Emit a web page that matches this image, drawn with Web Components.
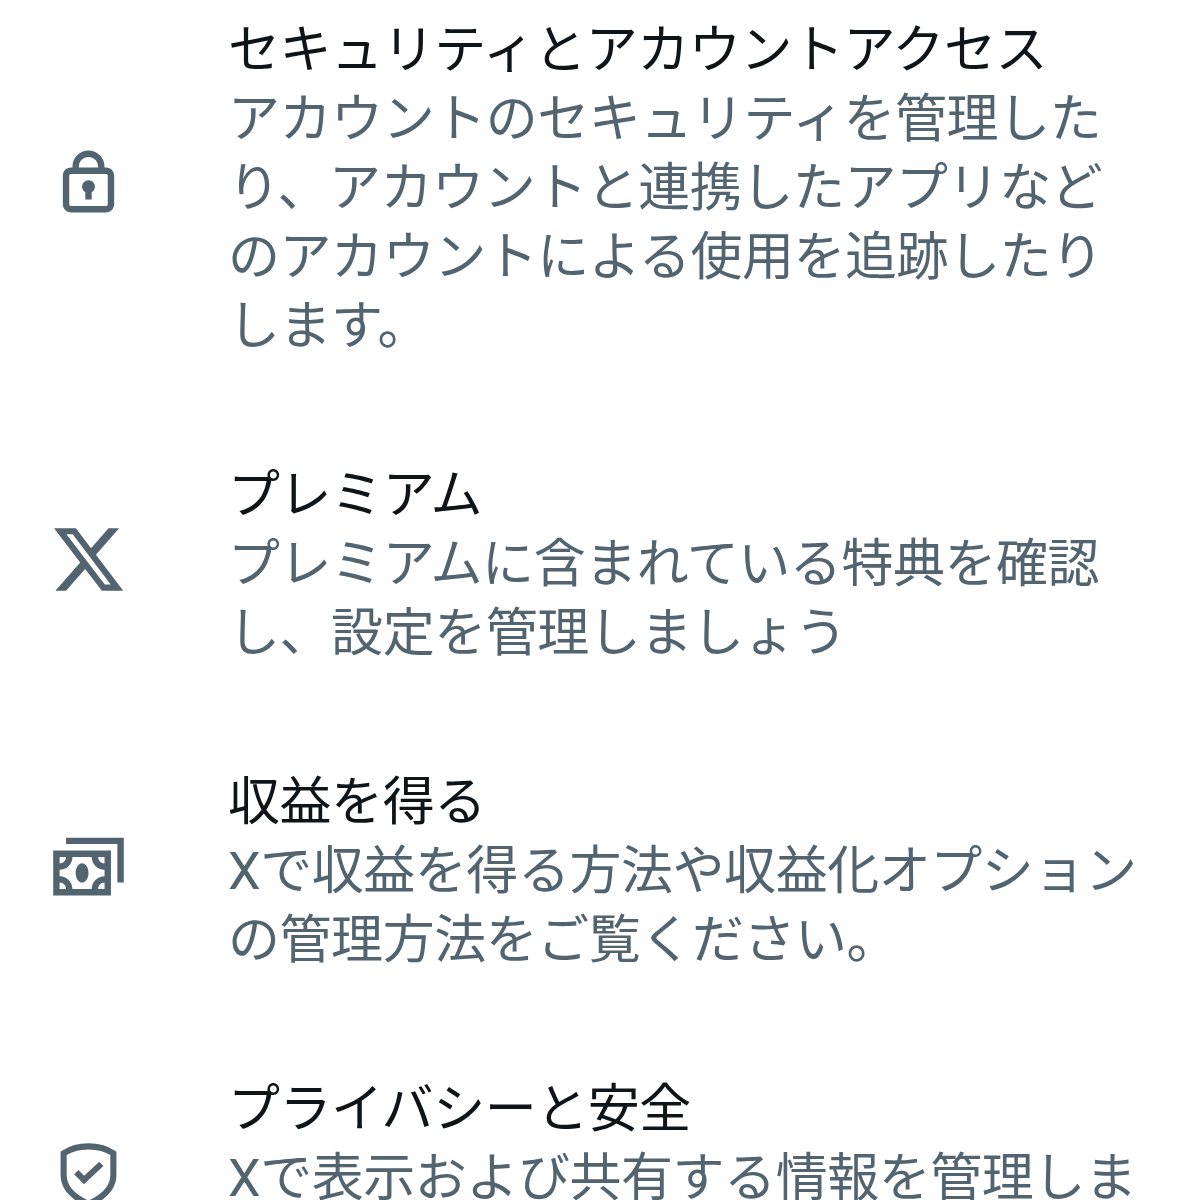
<!DOCTYPE html>
<html lang="ja">

<head>
  <meta charset="UTF-8">
  <title>設定</title>
  <style>
    html, body { margin: 0; background: #fff; }
  </style>
</head>

<body>
  <template id="list">
    <style>
      :host {
        display: flex;
        flex-direction: column;
        gap: 100px;
        height: 1200px;
        box-sizing: border-box;
        padding: 16px 0 0 50px;
        overflow: hidden;
        font-family: Roboto, "Noto Sans CJK JP", "Noto Sans", sans-serif;
        font-size: 52px;
        letter-spacing: -0.45px;
        line-height: 69px;
      }
    </style>
    <slot></slot>
  </template>

  <template id="item">
    <style>
      :host {
        display: flex;
        align-items: center;
        gap: 101px;
        width: 1000px;
        flex: none;
      }
      .icon { flex: none; display: flex; margin-bottom: 11px; }
      .text { width: 920px; flex: none; }
      .title { color: #0f1419; }
      .desc { color: #536471; }
    </style>
    <div class="icon"><slot name="icon"></slot></div>
    <div class="text">
      <div class="title"><slot name="title"></slot></div>
      <div class="desc"><slot name="desc"></slot></div>
    </div>
  </template>

  <template id="icon">
    <style>
      :host { display: block; width: 77px; height: 77px; color: #536471; }
      svg { display: block; width: 100%; height: 100%; }
    </style>
    <svg viewBox="0 0 24 24"></svg>
  </template>

  <settings-list>
    <settings-item>
      <set-icon slot="icon" name="lock"></set-icon>
      <span slot="title">セキュリティとアカウントアクセス</span>
      <span slot="desc">アカウントのセキュリティを管理したり、アカウントと連携したアプリなどのアカウントによる使用を追跡したりします。</span>
    </settings-item>
    <settings-item>
      <set-icon slot="icon" name="x"></set-icon>
      <span slot="title">プレミアム</span>
      <span slot="desc">プレミアムに含まれている特典を確認し、設定を管理しましょう</span>
    </settings-item>
    <settings-item>
      <set-icon slot="icon" name="money"></set-icon>
      <span slot="title">収益を得る</span>
      <span slot="desc">Xで収益を得る方法や収益化オプションの管理方法をご覧ください。</span>
    </settings-item>
    <settings-item>
      <set-icon slot="icon" name="shield"></set-icon>
      <span slot="title">プライバシーと安全</span>
      <span slot="desc">Xで表示および共有する情報を管理します。</span>
    </settings-item>
  </settings-list>

  <script>
    const icons = {
      lock: '<path fill="currentColor" fill-rule="evenodd" d="M17.5 7H17v-.25c0-2.76-2.24-5-5-5s-5 2.24-5 5V7h-.5C5.12 7 4 8.12 4 9.5v9C4 19.88 5.12 21 6.5 21h11c1.39 0 2.5-1.12 2.5-2.5v-9C20 8.12 18.89 7 17.5 7zM13 14.73V17h-2v-2.27c-.59-.34-1-.99-1-1.73 0-1.1.9-2 2-2 1.11 0 2 .9 2 2 0 .74-.4 1.39-1 1.73zM15 7H9v-.25c0-1.66 1.34-3 3-3 1.66 0 3 1.34 3 3V7zM6 9.5c0-.28.22-.5.5-.5h11c.28 0 .5.22.5.5v9c0 .28-.22.5-.5.5h-11c-.28 0-.5-.22-.5-.5v-9z"/>',
      x: '<path fill="currentColor" d="M18.244 2.25h3.308l-7.227 8.26 8.502 11.24H16.17l-5.214-6.817L4.99 21.75H1.68l7.73-8.835L1.254 2.25H8.08l4.713 6.231zm-1.161 17.52h1.833L7.084 4.126H5.117z"/>',
      money: '<path fill="currentColor" d="M23 3v14h-2V5H5V3h18zM10 17c1.1 0 2-1.34 2-3s-.9-3-2-3-2 1.34-2 3 .9 3 2 3zM1 7h18v14H1V7zm16 10c-1.1 0-2 .9-2 2h2v-2zm-2-8c0 1.1.9 2 2 2V9h-2zM3 11c1.1 0 2-.9 2-2H3v2zm0 4c2.21 0 4 1.79 4 4h6c0-2.21 1.79-4 4-4v-2c-2.21 0-4-1.79-4-4H7c0 2.21-1.79 4-4 4v2zm0 4h2c0-1.1-.9-2-2-2v2z"/>',
      shield: '<path fill="none" stroke="currentColor" stroke-width="1.9" d="M12 3.55c2.8 0 5.5.7 7.75 2.15v6.8c0 4.1-3 6.9-7.75 9-4.75-2.1-7.75-4.9-7.75-9V5.7C6.5 4.25 9.2 3.55 12 3.55z"/><path fill="none" stroke="currentColor" stroke-width="1.9" d="M8.2 11.6l2.4 2.4 5.4-5"/>'
    }

    class SettingsList extends HTMLElement {
      constructor() {
        super()
        this.attachShadow({ mode: "open" })
          .appendChild(document.getElementById("list").content.cloneNode(true))
      }
    }

    class SettingsItem extends HTMLElement {
      constructor() {
        super()
        this.attachShadow({ mode: "open" })
          .appendChild(document.getElementById("item").content.cloneNode(true))
      }
    }

    class SetIcon extends HTMLElement {
      constructor() {
        super()
        this.attachShadow({ mode: "open" })
          .appendChild(document.getElementById("icon").content.cloneNode(true))
      }
      connectedCallback() {
        this.shadowRoot.querySelector("svg").innerHTML = icons[this.getAttribute("name")]
      }
    }

    customElements.define("settings-list", SettingsList)
    customElements.define("settings-item", SettingsItem)
    customElements.define("set-icon", SetIcon)
  </script>
</body>

</html>
